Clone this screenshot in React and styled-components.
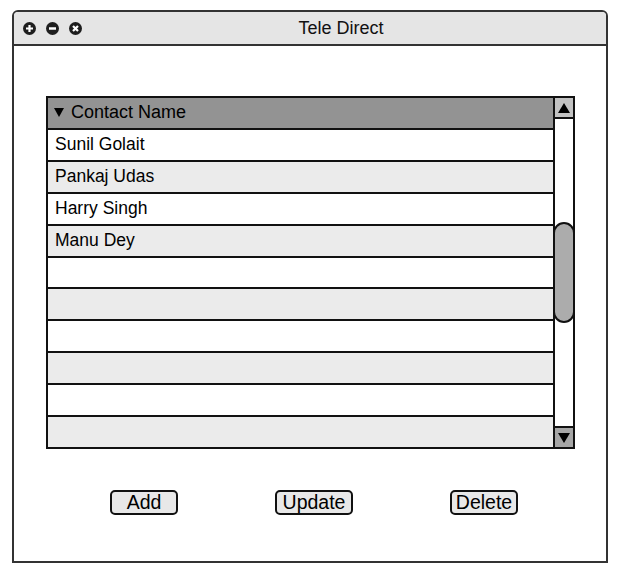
import React from 'react';
import styled, { createGlobalStyle } from 'styled-components';

const GlobalStyle = createGlobalStyle`
  body {
    margin: 0;
    background: #ffffff;
    font-family: "Liberation Sans", Arial, sans-serif;
  }
`;

const contacts = ['Sunil Golait', 'Pankaj Udas', 'Harry Singh', 'Manu Dey'];
const rows = [...contacts, '', '', '', '', '', ''];

const PlusIcon = () => (
  <svg width="13" height="13" viewBox="0 0 13 13">
    <circle cx="6.5" cy="6.5" r="6.5" fill="#1e1e1e" />
    <path d="M6.5 3v7M3 6.5h7" stroke="#fff" strokeWidth="2.2" />
  </svg>
);

const MinusIcon = () => (
  <svg width="13" height="13" viewBox="0 0 13 13">
    <circle cx="6.5" cy="6.5" r="6.5" fill="#1e1e1e" />
    <path d="M3 6.5h7" stroke="#fff" strokeWidth="2.4" />
  </svg>
);

const CloseIcon = () => (
  <svg width="13" height="13" viewBox="0 0 13 13">
    <circle cx="6.5" cy="6.5" r="6.5" fill="#1e1e1e" />
    <path d="M4 4l5 5M9 4l-5 5" stroke="#fff" strokeWidth="2.2" />
  </svg>
);

const Triangle = ({ up }) => (
  <svg width="12" height="10" viewBox="0 0 12 10">
    <path d={up ? 'M6 0L12 10H0Z' : 'M0 0H12L6 10Z'} fill="#000" />
  </svg>
);

const App = () => {
  return (
    <>
      <GlobalStyle />
      <Window>
        <TitleBar>
          <Controls>
            <PlusIcon />
            <MinusIcon />
            <CloseIcon />
          </Controls>
          <Title>Tele Direct</Title>
        </TitleBar>
        <Content>
          <Table>
            <List>
              <HeaderRow>
                <Arrow>
                  <svg width="10" height="9" viewBox="0 0 10 9">
                    <path d="M0 0H10L5 9Z" fill="#000" />
                  </svg>
                </Arrow>
                Contact Name
              </HeaderRow>
              {rows.map((name, i) => (
                <Row key={i} $alt={i % 2 === 1}>
                  {name}
                </Row>
              ))}
            </List>
            <ScrollBar>
              <ScrollButton $shade="#c2c2c2" $top>
                <Triangle up />
              </ScrollButton>
              <Track>
                <Thumb />
              </Track>
              <ScrollButton $shade="#a6a6a6">
                <Triangle />
              </ScrollButton>
            </ScrollBar>
          </Table>
          <Buttons>
            <Button $width={68}>Add</Button>
            <Button $width={78}>Update</Button>
            <Button $width={68}>Delete</Button>
          </Buttons>
        </Content>
      </Window>
    </>
  );
};

export default App;

const Window = styled.div`
  box-sizing: border-box;
  margin: 10px 0 0 12px;
  width: 596px;
  height: 553px;
  border: 2px solid #333333;
  border-radius: 6px 6px 0 0;
  display: flex;
  flex-direction: column;
  overflow: hidden;
`;

const TitleBar = styled.div`
  box-sizing: border-box;
  height: 34px;
  background: #e5e5e5;
  border-bottom: 2px solid #333333;
  display: flex;
  align-items: center;
`;

const Controls = styled.div`
  display: flex;
  align-items: center;
  gap: 10px;
  padding: 1px 0 0 9px;
`;

const Title = styled.div`
  flex: 1;
  text-align: center;
  font-size: 18px;
  color: #111111;
  padding-right: 6px;
  padding-top: 1px;
`;

const Content = styled.div`
  flex: 1;
  display: flex;
  flex-direction: column;
  padding: 50px 0 0 32px;
`;

const Table = styled.div`
  box-sizing: border-box;
  width: 529px;
  height: 353px;
  border: 2px solid #111111;
  display: flex;
`;

const List = styled.div`
  flex: 1;
  display: flex;
  flex-direction: column;
  gap: 2px;
  background: #111111;
`;

const Row = styled.div`
  flex: 1;
  display: flex;
  align-items: center;
  padding-left: 7px;
  font-size: 17.5px;
  color: #000000;
  background: ${(p) => (p.$alt ? '#ebebeb' : '#ffffff')};
`;

const HeaderRow = styled(Row)`
  background: #939393;
  padding-left: 6px;
  font-size: 18px;
`;

const Arrow = styled.span`
  display: flex;
  margin-right: 7px;
`;

const ScrollBar = styled.div`
  width: 18px;
  border-left: 2px solid #111111;
  display: flex;
  flex-direction: column;
  background: #ffffff;
`;

const ScrollButton = styled.div`
  height: 19px;
  background: ${(p) => p.$shade};
  border-${(p) => (p.$top ? 'bottom' : 'top')}: 2px solid #111111;
  display: flex;
  align-items: center;
  justify-content: center;
`;

const Track = styled.div`
  flex: 1;
`;

const Thumb = styled.div`
  box-sizing: border-box;
  margin: 103px 0 0 -2px;
  width: calc(100% + 4px);
  height: 101px;
  border: 2px solid #111111;
  border-radius: 11px;
  background: #acacac;
`;

const Buttons = styled.div`
  display: flex;
  justify-content: space-between;
  margin-top: 41px;
  padding: 0 88px 0 64px;
`;

const Button = styled.div`
  box-sizing: border-box;
  width: ${(p) => p.$width}px;
  height: 25px;
  border: 2px solid #111111;
  border-radius: 5px;
  background: #e8e8e8;
  font-size: 19.5px;
  color: #000000;
  display: flex;
  align-items: center;
  justify-content: center;
`;
